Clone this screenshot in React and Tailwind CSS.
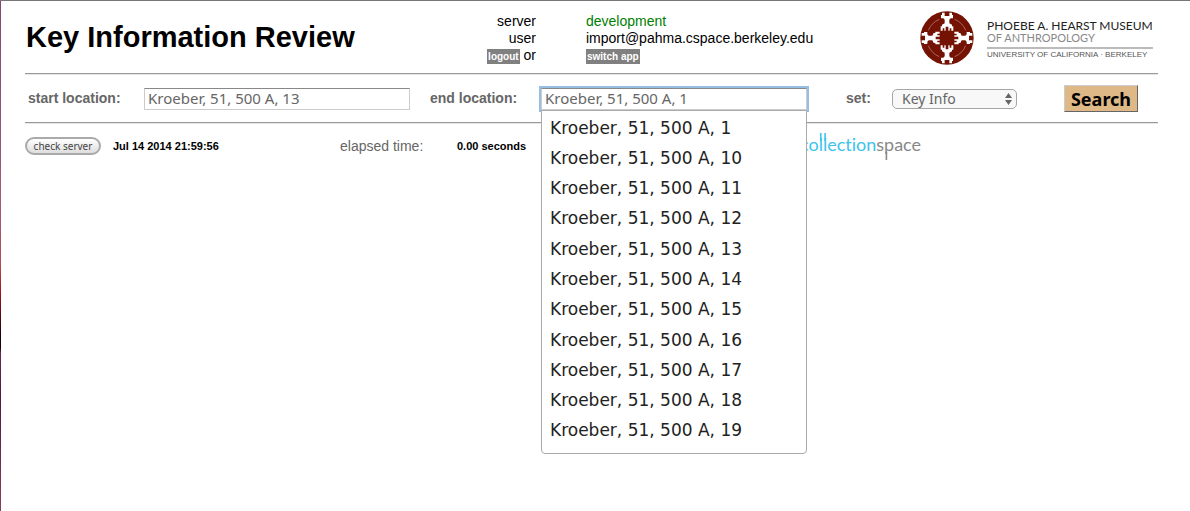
import { useState } from "react";

const suggestions = [1, 10, 11, 12, 13, 14, 15, 16, 17, 18, 19].map(
  (n) => `Kroeber, 51, 500 A, ${n}`
);

function Rule() {
  return <hr className="h-[2px] border-0 border-t border-[#999] bg-[#e6e6e6]" />;
}

function Figure({ angle }) {
  return (
    <g transform={`rotate(${angle} 81 81)`}>
      <path
        d="M66 5H74V15H88V5H96V12H99V22H92L88 26V37L96 41V46H100V59H94V52H89V59H85V47H77V59H73V52H68V59H62V46H66V41L74 37V26L70 22H63V12H66Z"
        fill="#fff"
      />
      <path d="M104 25A60 60 0 0 1 137 58" fill="none" stroke="#c99083" strokeWidth="2" />
    </g>
  );
}

function MuseumLogo() {
  return (
    <div className="flex items-start gap-[13px] pt-[10px] pl-px">
      <svg viewBox="0 0 162 162" className="size-[54px] shrink-0" aria-hidden="true">
        <circle cx="81" cy="81" r="80" fill="#741204" />
        <Figure angle={0} />
        <Figure angle={90} />
        <Figure angle={180} />
        <Figure angle={270} />
      </svg>
      <div className="pt-2 font-[Lato,sans-serif] whitespace-nowrap">
        <div className="text-[12px] leading-[13px] text-[#222]">PHOEBE A. HEARST MUSEUM</div>
        <div className="text-[11px] leading-[12px] text-[#888]">OF ANTHROPOLOGY</div>
        <div className="mt-[3px] border-t-2 border-[#bbb] pt-[2px] font-['Liberation_Sans',sans-serif] text-[8px] leading-2 text-[#555]">
          UNIVERSITY OF CALIFORNIA · BERKELEY
        </div>
      </div>
    </div>
  );
}

function CollectionSpaceLogo() {
  return (
    <svg width="130" height="34" viewBox="0 0 130 34" role="img" aria-label="collectionspace" className="[font-variant-ligatures:none]">
      <text x="0" y="22" fontFamily="Lato, sans-serif" fontSize="18" fill="#888">
        <tspan fill="#3cc3ee">collection</tspan>space
      </text>
      <path d="M20.8 4V12M25.1 4V12" stroke="#3cc3ee" strokeWidth="1.6" />
      <path d="M86.4 23V31" stroke="#888" strokeWidth="1.6" />
    </svg>
  );
}

export default function App() {
  const [start, setStart] = useState("Kroeber, 51, 500 A, 13");
  const [end, setEnd] = useState("Kroeber, 51, 500 A, 1");

  return (
    <div className="flex min-h-screen border-t border-[#777] bg-white font-['Liberation_Sans',Arial,sans-serif] text-[14px] text-black">
      <div className="w-px shrink-0 bg-[linear-gradient(#87457a,#a8587a_40%,#b04c50_52%,#a01520_57%,#1a0008_66%,#1a0008_68%,#6d2850_69%,#5a1640_78%,#8d3b5e)]" />
      <div className="min-w-0 grow pr-8 pl-6">
        <header className="grid h-[72px] grid-cols-[minmax(0,1fr)_50px_333px_239px]">
          <div className="flex justify-between">
            <h1 className="pt-[18px] pl-px text-[29px] leading-9 font-bold whitespace-nowrap">Key Information Review</h1>
            <div className="pt-3 text-right leading-[17px]">
              <div>server</div>
              <div>user</div>
              <div>
                <a href="#logout" className="inline-block bg-[#808080] px-px text-[10px] leading-[15px] font-bold text-white">logout</a> or
              </div>
            </div>
          </div>
          <div />
          <div className="pt-3 leading-[17px]">
            <div className="text-[#008000]">development</div>
            <div>import@pahma.cspace.berkeley.edu</div>
            <div>
              <a href="#apps" className="inline-block bg-[#808080] px-px text-[10px] leading-[15px] font-bold text-white">switch app</a>
            </div>
          </div>
          <MuseumLogo />
        </header>
        <Rule />
        <form
          className="grid h-[47px] grid-cols-[119px_286px_111px_305px_46px_minmax(0,1fr)_94px] items-center text-[#666]"
          onSubmit={(e) => e.preventDefault()}
        >
          <label htmlFor="start" className="pl-[3px] font-bold">start location:</label>
          <input
            id="start"
            value={start}
            onChange={(e) => setStart(e.target.value)}
            className="h-[22px] w-[266px] border border-[#ccc] border-t-[#888] px-[3px] font-['Noto_Sans',sans-serif] text-[15px] outline-none"
          />
          <label htmlFor="end" className="font-bold">end location:</label>
          <div className="relative w-[266px]">
            <input
              id="end"
              value={end}
              onChange={(e) => setEnd(e.target.value)}
              className="block h-[22px] w-full border border-[#ccc] border-t-[#888] px-[3px] font-['Noto_Sans',sans-serif] text-[15px] ring-2 ring-[#97bfe4] outline-none"
            />
            <ul className="absolute top-full left-0 z-10 flex h-[344px] w-full flex-col justify-between rounded-b border border-[#aaa] bg-white pt-[2px] pb-[7px] font-['DejaVu_Sans',Verdana,sans-serif] text-[17px] text-[#222]">
              {suggestions.map((s) => (
                <li key={s} className="px-2 leading-[30px]">{s}</li>
              ))}
            </ul>
          </div>
          <label htmlFor="set" className="font-bold">set:</label>
          <div className="relative w-[125px]">
            <select
              id="set"
              className="block h-5 w-full appearance-none rounded-[5px] border border-[#a6a6a6] bg-[#f8f8f8] pl-[9px] font-['Noto_Sans',sans-serif] text-[14px] leading-[18px]"
            >
              <option>Key Info</option>
            </select>
            <svg viewBox="0 0 7 12" className="pointer-events-none absolute top-1 right-[5px] h-3 w-[7px]" aria-hidden="true">
              <path d="M3.5 0L7 5H0ZM3.5 12L7 7H0Z" fill="#666" />
            </svg>
          </div>
          <button
            type="submit"
            className="h-[27px] w-[74px] border border-[#ccc] border-r-[#666] border-b-[#666] bg-[#deb887] font-['Noto_Sans',sans-serif] text-[18px] leading-6 font-bold text-black"
          >
            Search
          </button>
        </form>
        <Rule />
        <div className="grid h-11 grid-cols-[88px_227px_117px_343px_minmax(0,1fr)] items-center">
          <button
            type="button"
            className="h-[18px] w-[76px] rounded-full border-2 border-[#aaa] bg-linear-to-b from-white to-[#ddd] font-['Noto_Sans',sans-serif] text-[10px] leading-3 text-[#444]"
          >
            check server
          </button>
          <span className="text-[11px] font-bold">Jul 14 2014 21:59:56</span>
          <span className="text-[#666]">elapsed time:</span>
          <span className="text-[11px] font-bold">0.00 seconds</span>
          <CollectionSpaceLogo />
        </div>
      </div>
    </div>
  );
}
